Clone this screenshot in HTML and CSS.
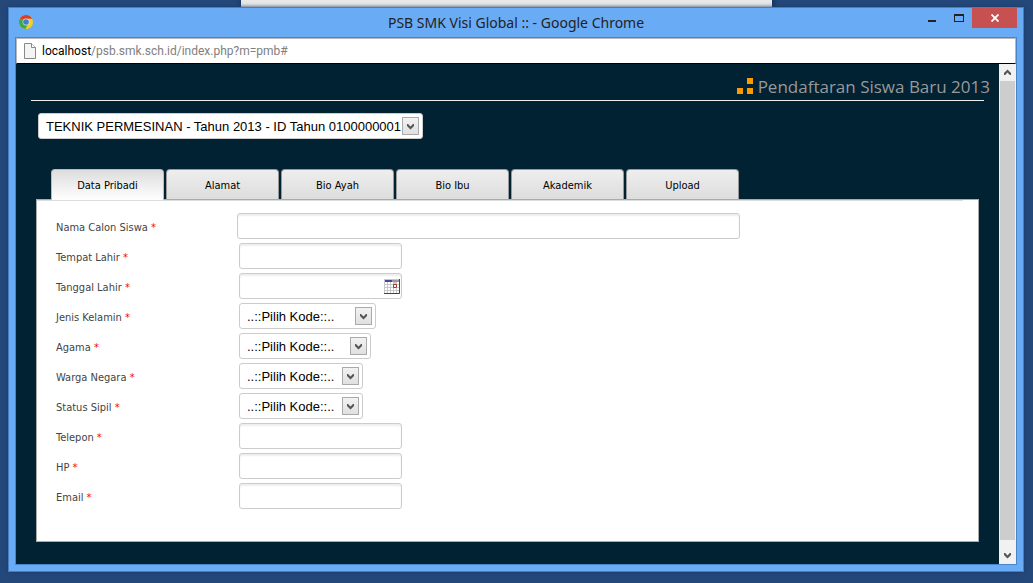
FILE: index.html
```html
<!DOCTYPE html>
<html lang="id">
	<head>
		<meta charset="UTF-8">
		<title>PSB SMK Visi Global ::</title>
		<link rel="stylesheet" href="styles.css">
	</head>

	<body>
		<svg class="defs" width="0" height="0">
			<symbol id="down" viewBox="0 0 15 16">
				<path d="M4 6v2l3.500 3.500L11 8V6h-1L7.500 8.500 5 6z" fill="#555"/>
			</symbol>
		</svg>
		<div class="behind"></div>

		<div class="window">
			<div class="titlebar">
				<svg class="logo" width="16" height="16" viewBox="0 0 16 16">
					<circle cx="8" cy="8" r="7" fill="#f9d01c"/>
					<path d="M8 8L1.900 4.600A7 7 0 0 1 14.200 4.800H8z" fill="#de3b2b"/>
					<path d="M8 8L1.900 4.600A7 7 0 0 0 7.300 15L10.500 9.800z" fill="#3fa845"/>
					<circle cx="8" cy="8" r="3.400" fill="#d5e3e6"/>
					<circle cx="8" cy="8" r="2.800" fill="#3d7fd0"/>
				</svg>
				<span class="caption">PSB SMK Visi Global :: - Google Chrome</span>
				<div class="winbtns">
					<button type="button" aria-label="Minimize">
						<svg width="10" height="12" viewBox="0 0 10 12"><path d="M1 9h8v2H1z" fill="#222"/></svg>
					</button>
					<button type="button" aria-label="Maximize">
						<svg width="10" height="12" viewBox="0 0 10 12"><path d="M0 3h10v8H0zM1 5v5h8V5z" fill="#222" fill-rule="evenodd"/></svg>
					</button>
					<button type="button" class="close" aria-label="Close">
						<svg width="8" height="8" viewBox="0 0 8 8"><path d="M.5.5l7 7M7.500.5l-7 7" stroke="#fff" stroke-width="1.800"/></svg>
					</button>
				</div>
			</div>

			<div class="frame">
				<div class="address">
					<svg width="12" height="16" viewBox="0 0 12 16">
						<path d="M.5.5h7l4 4v11H.5z" fill="#f4f4f4" stroke="#888"/>
						<path d="M7.500.5v4h4" fill="#fff" stroke="#888"/>
					</svg>
					<span class="url"><b>localhost</b>/psb.smk.sch.id/index.php?m=pmb#</span>
				</div>

				<div class="view">
					<div class="page">
						<h1>
							<span>
								<svg width="16" height="17" viewBox="0 0 16 17"><path d="M0 11h6v6H0zM10 11h6v6h-6zM10 1h6v6h-6z" fill="#f90"/></svg>
								Pendaftaran Siswa Baru 2013
							</span>
						</h1>
						<div class="program">
							<span class="select">
								<select aria-label="Program">
									<option>TEKNIK PERMESINAN - Tahun 2013 - ID Tahun 0100000001</option>
								</select>
								<svg><use href="#down"/></svg>
							</span>
						</div>

						<div class="tabs">
							<button type="button" class="active">Data Pribadi</button>
							<button type="button">Alamat</button>
							<button type="button">Bio Ayah</button>
							<button type="button">Bio Ibu</button>
							<button type="button">Akademik</button>
							<button type="button">Upload</button>
						</div>
						<div class="panel">
							<form>
								<div class="row name">
									<label for="nama">Nama Calon Siswa <i>*</i></label>
									<input type="text" id="nama">
								</div>
								<div class="row">
									<label for="tempat">Tempat Lahir <i>*</i></label>
									<input type="text" id="tempat">
								</div>
								<div class="row">
									<label for="tanggal">Tanggal Lahir <i>*</i></label>
									<span class="date">
										<input type="text" id="tanggal">
										<svg width="16" height="15" viewBox="0 0 16 15">
											<path d="M0 0h16v15H0z" fill="#c8c8c8"/>
											<path d="M1 3h2v2H1zM4 3h2v2H4zM7 3h2v2H7zM13 3h2v2h-2zM1 6h2v2H1zM4 6h2v2H4zM7 6h2v2H7zM13 6h2v2h-2zM1 9h2v2H1zM4 9h2v2H4zM7 9h2v2H7zM10 9h2v2h-2zM13 9h2v2h-2zM1 12h2v2H1zM4 12h2v2H4zM7 12h2v2H7zM10 12h2v2h-2zM13 12h2v2h-2z" fill="#fff"/>
											<path d="M1 1h7v2H1z" fill="#44a"/>
											<path d="M8 1h7v2H8z" fill="#999"/>
											<path d="M9.500 5.500h3v3h-3z" fill="#fff" stroke="#a33"/>
											<path d="M0 14.500h15.500V0" fill="none" stroke="#444"/>
										</svg>
									</span>
								</div>
								<div class="row">
									<label for="kelamin">Jenis Kelamin <i>*</i></label>
									<span class="select kelamin">
										<select id="kelamin"><option>..::Pilih Kode::..</option></select>
										<svg><use href="#down"/></svg>
									</span>
								</div>
								<div class="row">
									<label for="agama">Agama <i>*</i></label>
									<span class="select agama">
										<select id="agama"><option>..::Pilih Kode::..</option></select>
										<svg><use href="#down"/></svg>
									</span>
								</div>
								<div class="row">
									<label for="warga">Warga Negara <i>*</i></label>
									<span class="select kode">
										<select id="warga"><option>..::Pilih Kode::..</option></select>
										<svg><use href="#down"/></svg>
									</span>
								</div>
								<div class="row">
									<label for="sipil">Status Sipil <i>*</i></label>
									<span class="select kode">
										<select id="sipil"><option>..::Pilih Kode::..</option></select>
										<svg><use href="#down"/></svg>
									</span>
								</div>
								<div class="row">
									<label for="telepon">Telepon <i>*</i></label>
									<input type="text" id="telepon">
								</div>
								<div class="row">
									<label for="hp">HP <i>*</i></label>
									<input type="text" id="hp">
								</div>
								<div class="row">
									<label for="email">Email <i>*</i></label>
									<input type="text" id="email">
								</div>
							</form>
						</div>
					</div>

					<div class="scrollbar">
						<svg width="15" height="17" viewBox="0 0 15 17"><path d="M4 11V9l3.500-3.500L11 9v2H9.800L7.500 8.500 5.200 11z" fill="#555"/></svg>
						<div class="thumb"></div>
						<svg width="15" height="24" viewBox="0 0 15 24"><path d="M4 13v2l3.500 3.500L11 15v-2H9.800l-2.300 2.500L5.200 13z" fill="#555"/></svg>
					</div>
				</div>
			</div>
		</div>
	</body>
</html>
```
FILE: styles.css
```css
*{
	margin: 0;
	padding: 0;
	box-sizing: border-box;
}
body{
	min-height: 100vh;
	display: flex;
	padding: 7px 9px 11px 8px;
	background: #24487a;
	font-family: "DejaVu Sans Condensed", "DejaVu Sans", sans-serif;
	font-size: 11px;
}
button, input, select{
	font: inherit;
}
.defs{
	position: absolute;
}
/* window that is peeking out behind this one */
.behind{
	position: absolute;
	top: 0;
	left: 241px;
	right: 261px;
	height: 7px;
	background: #e8e8e8;
	box-shadow: 1px 0 6px #0a1c38;
}

.window{
	position: relative;
	flex: 1;
	display: flex;
	flex-direction: column;
	padding: 0 7px 7px 7px;
	border: 1px solid #467fc0;
	background: #6aabf6;
	box-shadow: 0 0 4px #1d3c68;
}
.titlebar{
	height: 30px;
	display: flex;
	justify-content: space-between;
}
.logo{
	margin: 6px 0 0 2px;
}
.caption{
	flex: 1;
	padding-left: 80px;
	text-align: center;
	font-family: "Noto Sans", sans-serif;
	font-size: 14px;
	line-height: 29px;
	color: #222;
}
.winbtns{
	display: flex;
}
.winbtns button{
	width: 27px;
	height: 20px;
	border: 0;
	background: none;
}
.winbtns .close{
	width: 45px;
	margin-right: -1px;
	background: #c75050;
}

.frame{
	flex: 1;
	display: flex;
	flex-direction: column;
	outline: 1px solid #4a85ca;
}
.address{
	height: 26px;
	display: flex;
	align-items: center;
	padding-left: 7px;
	border: 1px solid #b8b8b8;
	border-bottom: 1px solid #000;
	background: #fff;
}
.url{
	margin-left: 6px;
	font-family: Roboto, sans-serif;
	font-size: 12px;
	line-height: 24px;
	color: #808080;
}
.url b{
	font-weight: normal;
	color: #000;
}
.view{
	flex: 1;
	display: flex;
	background: #002233;
}
.page{
	flex: 1;
	padding: 0 15px 22px;
}

h1{
	height: 37px;
	padding-top: 10px;
	margin-bottom: 12px;
	border-bottom: 1px solid #eee;
	text-align: right;
	font-family: "Open Sans", sans-serif;
	font-size: 17px;
	font-weight: normal;
	line-height: 26px;
	white-space: nowrap;
	color: #999;
}
h1 span{
	margin-right: -6px;
}
h1 svg{
	vertical-align: -1px;
}
.program{
	padding-left: 7px;
	margin-bottom: 30px;
}

/* fields */
input, select{
	width: 163px;
	height: 26px;
	border: 1px solid #ccc;
	border-radius: 3px;
	background: #fff;
	color: #000;
}
input{
	padding: 0 6px;
	box-shadow: inset 0 2px 2px #eee;
}
.select, .date{
	position: relative;
	display: inline-block;
	height: 26px;
	vertical-align: top;
}
select{
	width: 100%;
	padding: 0 20px 0 7px;
	appearance: none;
	font-family: "Liberation Sans", Arial, sans-serif;
	font-size: 13px;
}
.program .select{
	width: 385px;
}
.select svg{
	position: absolute;
	top: 4px;
	right: 4px;
	width: 17px;
	height: 18px;
	border: 1px solid #aaa;
	background: linear-gradient(#f2f2f2, #e0e0e0);
	pointer-events: none;
}
.date svg{
	position: absolute;
	top: 6px;
	right: 2px;
}
.kelamin{
	width: 137px;
}
.agama{
	width: 132px;
}
.kode{
	width: 124px;
}

/* tabs */
.tabs{
	display: flex;
	gap: 2px;
	padding-left: 20px;
}
.tabs button{
	width: 113px;
	height: 30px;
	padding-top: 1px;
	border: 1px solid #999;
	border-bottom: 0;
	border-radius: 4px 4px 0 0;
	background: linear-gradient(#eee, #ddd);
	color: #000;
}
.tabs .active{
	position: relative;
	height: 31px;
	padding-top: 0;
	margin-bottom: -1px;
	border-color: #bbb;
	background: linear-gradient(#ddd, #fff);
}
.panel{
	min-height: 343px;
	margin: 0 5px;
	border: 1px solid #aaa;
	background: #fff;
}
form{
	padding: 12px 0 0 19px;
	margin-right: 15px;
	border-top: 1px solid #ddd;
}
.row{
	display: flex;
	margin-bottom: 4px;
}
.row label{
	width: 183px;
	line-height: 30px;
	height: 26px;
	color: #444;
}
.row i{
	font-style: normal;
	color: #f00;
}
.name label{
	width: 181px;
}
.name input{
	width: 503px;
}

.scrollbar{
	width: 17px;
	display: flex;
	flex-direction: column;
	padding: 0 1px;
	background: #f1f1f1;
}
.thumb{
	flex: 1;
	background: #cdcdcd;
}
```
